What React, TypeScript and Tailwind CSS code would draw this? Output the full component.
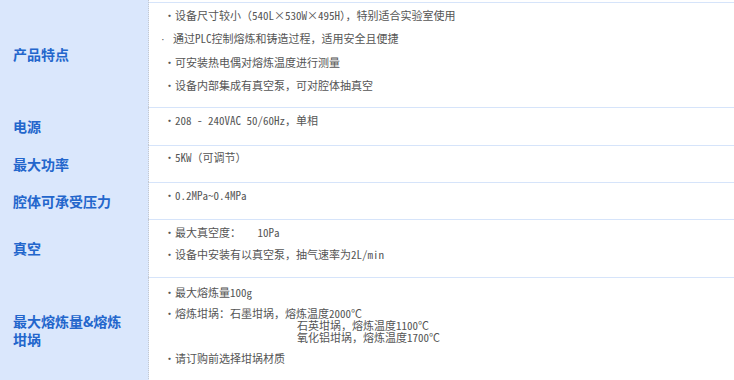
const body = '"Noto Sans Mono CJK SC", "Noto Sans CJK SC", "Liberation Mono", monospace';

type Row = {
	label: React.ReactNode;
	h: string;
	pt: string;
	gap: string;
	items: React.ReactNode[];
};

function Item({ children, dot = "・" }: { children: React.ReactNode; dot?: string }) {
	return (
		<div className="whitespace-pre leading-[12px]">
			{dot}
			{children}
		</div>
	);
}

const ROWS: Row[] = [
	{
		label: "产品特点",
		h: "h-[107px]",
		pt: "pt-[6px]",
		gap: "gap-[11px]",
		items: [
			<Item key="a">设备尺寸较小（540L×530W×495H），特别适合实验室使用</Item>,
			<div key="b" className="-ml-[3px] whitespace-pre leading-[12px]">
				<span className="inline-block w-[12px]" style={{ fontFamily: '"Liberation Sans", sans-serif' }}>
					·
				</span>
				通过PLC控制熔炼和铸造过程，适用安全且便捷
			</div>,
			<Item key="c">可安装热电偶对熔炼温度进行测量</Item>,
			<Item key="d">设备内部集成有真空泵，可对腔体抽真空</Item>,
		],
	},
	{
		label: "电源",
		h: "h-[38px]",
		pt: "pt-[6px]",
		gap: "gap-[11px]",
		items: [<Item key="a">208 - 240VAC 50/60Hz，单相</Item>],
	},
	{
		label: "最大功率",
		h: "h-[37px]",
		pt: "pt-[5px]",
		gap: "gap-[11px]",
		items: [<Item key="a">5KW（可调节）</Item>],
	},
	{
		label: "腔体可承受压力",
		h: "h-[37px]",
		pt: "pt-[6px]",
		gap: "gap-[11px]",
		items: [<Item key="a">0.2MPa~0.4MPa</Item>],
	},
	{
		label: "真空",
		h: "h-[58px]",
		pt: "pt-[6px]",
		gap: "gap-[10px]",
		items: [
			<Item key="a">最大真空度：   10Pa</Item>,
			<Item key="b">设备中安装有以真空泵，抽气速率为2L/min</Item>,
		],
	},
	{
		label: (
			<>
				最大熔炼量&amp;熔炼
				<br />
				坩埚
			</>
		),
		h: "h-[106px]",
		pt: "pt-[8px]",
		gap: "gap-[9px]",
		items: [
			<Item key="a">最大熔炼量100g</Item>,
			<div key="b">
				<Item>熔炼坩埚：石墨坩埚，熔炼温度2000℃</Item>
				<div className="ml-[133px] whitespace-pre leading-[12px]">石英坩埚，熔炼温度1100℃</div>
				<div className="ml-[133px] whitespace-pre leading-[12px]">氧化铝坩埚，熔炼温度1700℃</div>
			</div>,
			<Item key="c">请订购前选择坩埚材质</Item>,
		],
	},
];

export default function App() {
	return (
		<div className="h-[380px] w-[734px] overflow-hidden bg-white">
			{ROWS.map((r, i) => (
				<div key={i} className={`flex ${r.h}`}>
					<div
						className="flex w-[149px] shrink-0 items-center whitespace-nowrap border-r border-dotted border-[#c4c8cf] bg-[#dae7fc] pl-[13px] text-[14px] font-bold leading-[18px] text-[#2366cc]"
						style={{ fontFamily: '"Noto Sans CJK SC", sans-serif' }}
					>
						<div>{r.label}</div>
					</div>
					<div
						className={`flex flex-1 flex-col border-t border-[#d6e4fa] pl-[15px] text-[11px] text-[#555] ${r.pt} ${r.gap} ${i === 0 ? "mt-[2px]" : ""}`}
						style={{ fontFamily: body }}
					>
						{r.items}
					</div>
				</div>
			))}
		</div>
	);
}
